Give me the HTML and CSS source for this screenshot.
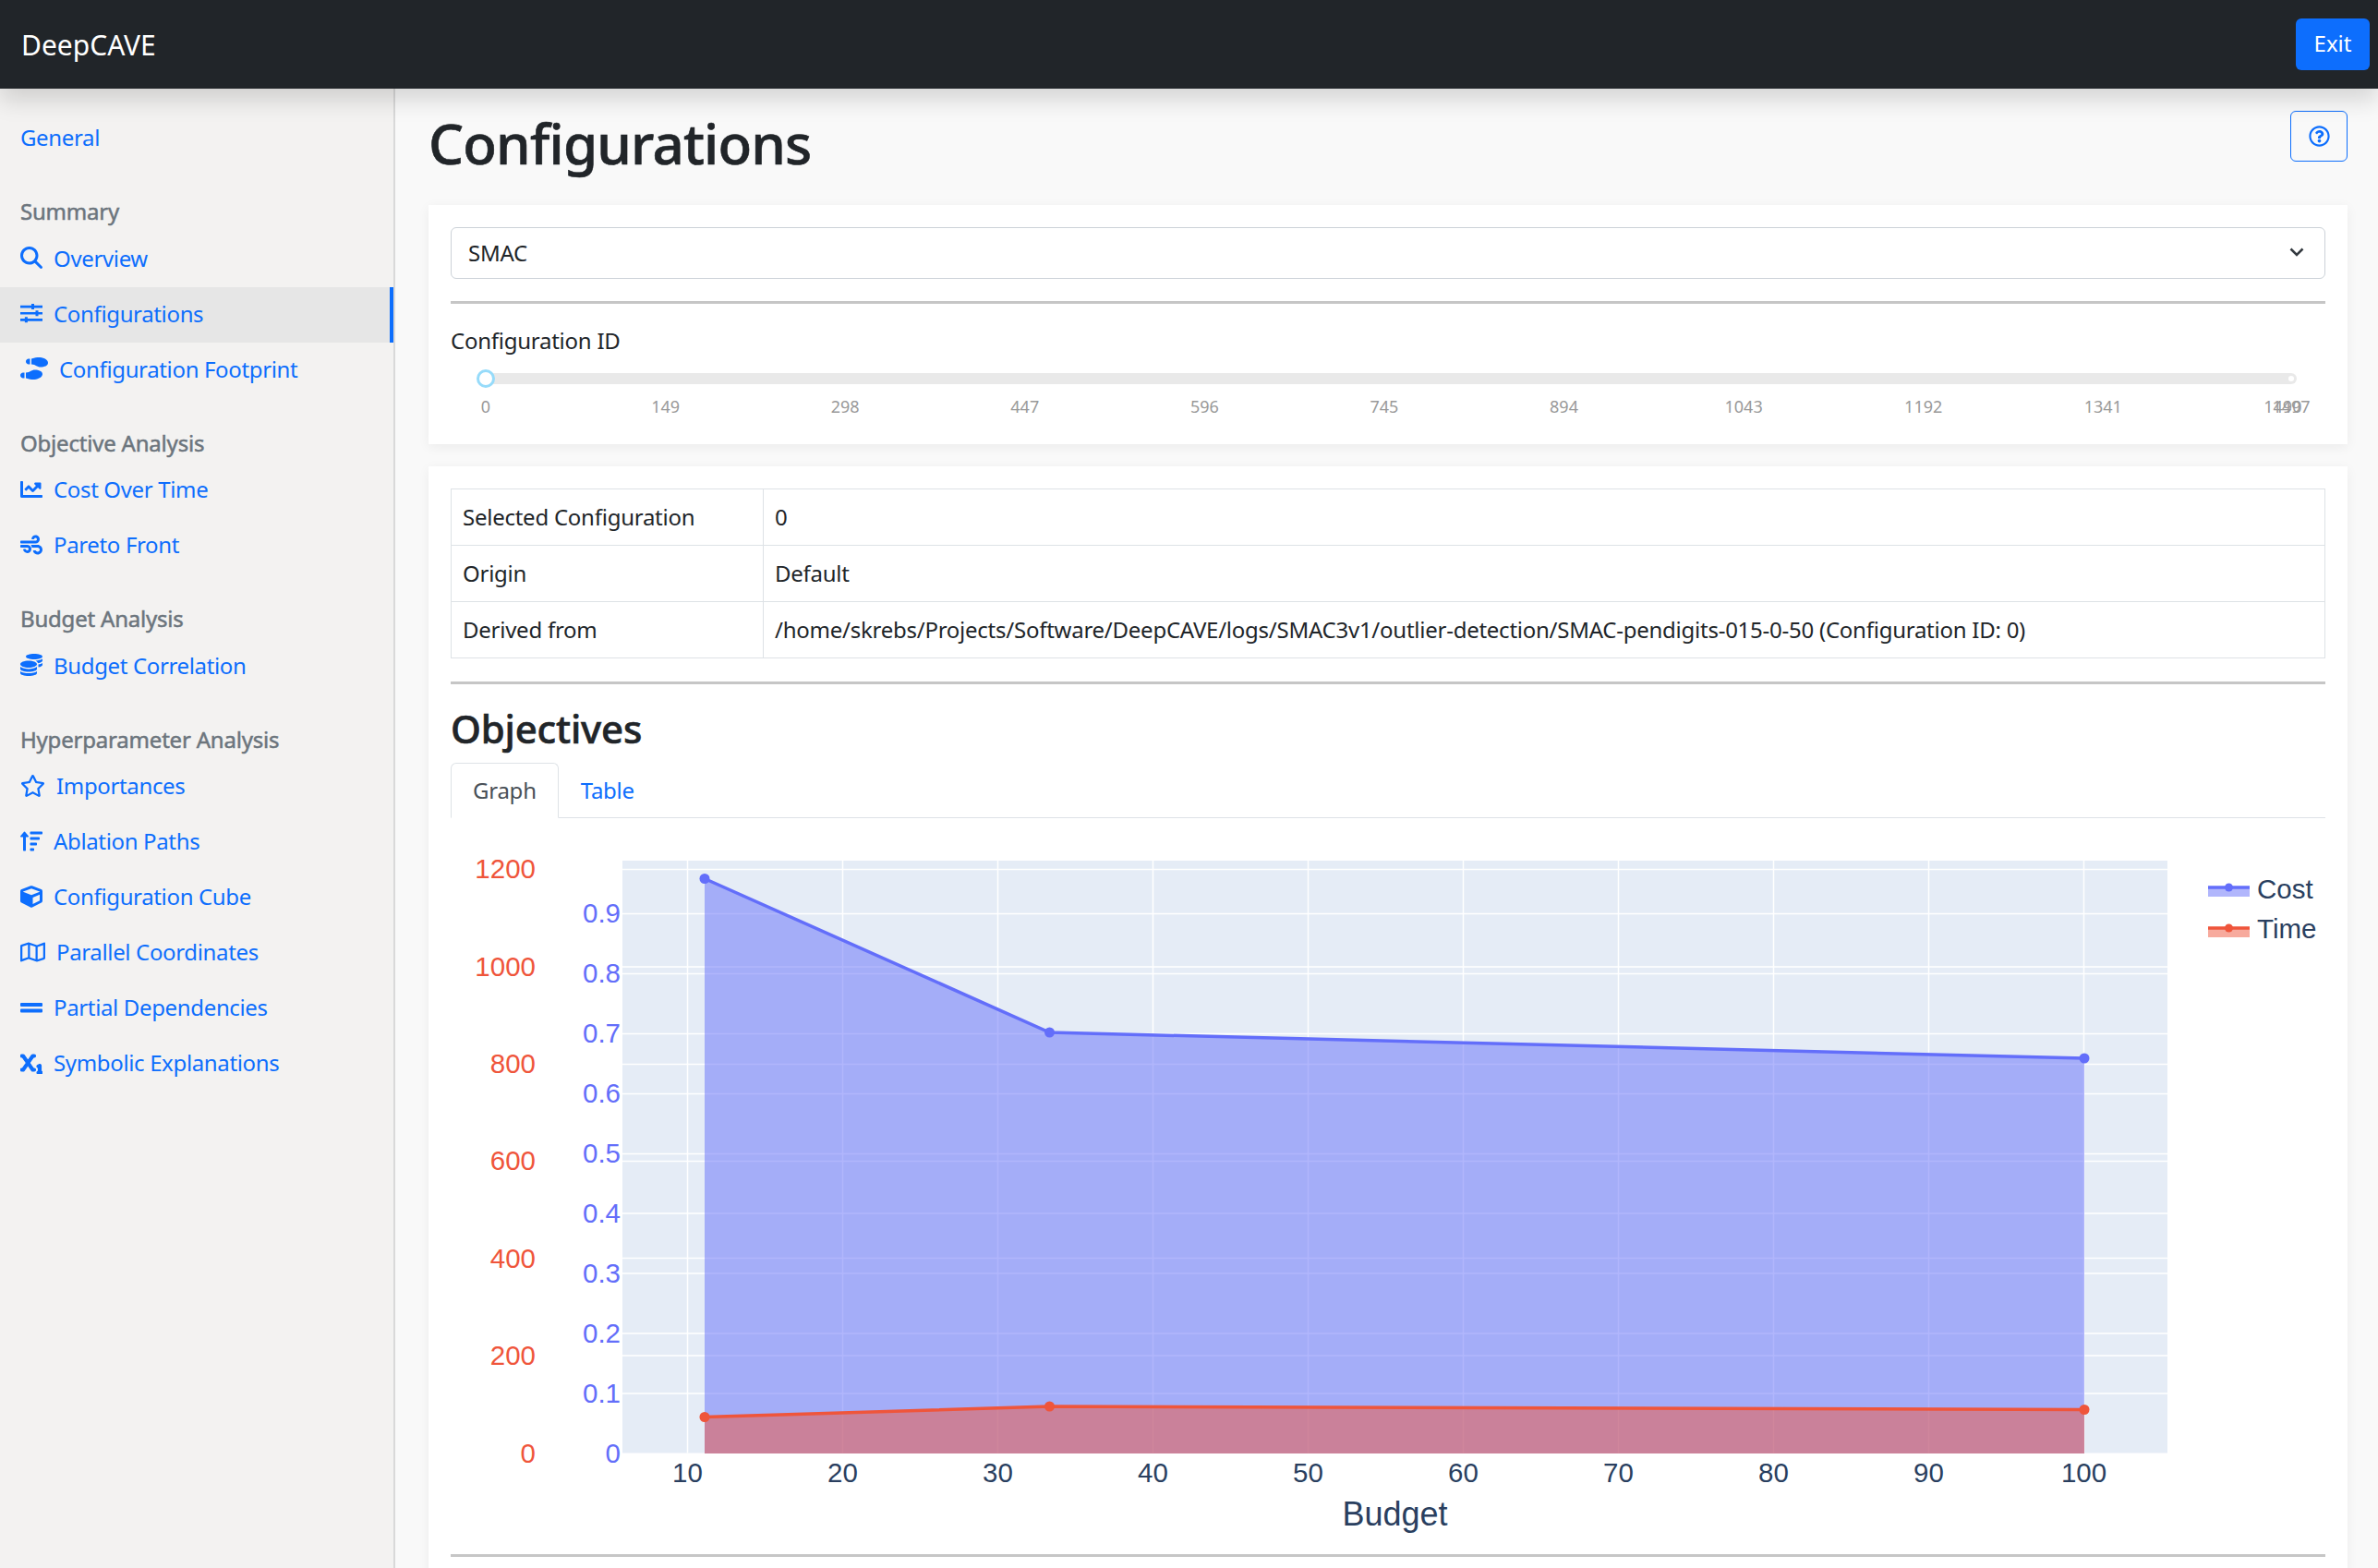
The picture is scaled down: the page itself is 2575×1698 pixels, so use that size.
FILE: index.html
```html
<!DOCTYPE html>
<html lang="en">
  <head>
    <meta charset="UTF-8" />
    <title>DeepCAVE</title>
    <link rel="stylesheet" href="styles.css">
  </head>
  <body>
    <header class="navbar">
      <span class="brand">DeepCAVE</span>
      <button class="exit-btn">Exit</button>
    </header>

    <div class="layout">
      <nav class="sidebar">
        <a class="nav-link">General</a>

        <div class="nav-heading">Summary</div>
        <a class="nav-link">
          <svg class="icon" viewBox="0 0 512 512"><path d="M416 208c0 45.9-14.9 88.3-40 122.7L502.6 457.4c12.5 12.5 12.5 32.8 0 45.3s-32.8 12.5-45.3 0L330.7 376c-34.4 25.2-76.8 40-122.7 40C93.1 416 0 322.9 0 208S93.1 0 208 0S416 93.1 416 208zM208 352a144 144 0 1 0 0-288 144 144 0 1 0 0 288z"/></svg>
          Overview
        </a>
        <a class="nav-link active">
          <svg class="icon" viewBox="0 0 512 512"><path d="M0 80h512v56H0zM0 232h512v56H0zM0 384h512v56H0zM256 44h64v128h-64zM352 196h64v128h-64zM104 348h64v128h-64z"/></svg>
          Configurations
        </a>
        <a class="nav-link">
          <svg class="icon icon-wide" viewBox="0 0 640 512"><path d="M192 160h32V32h-32c-35.35 0-64 28.65-64 64s28.65 64 64 64zM0 416c0 35.35 28.65 64 64 64h32V352H64c-35.35 0-64 28.65-64 64zm337.46-128c-34.91 0-76.16 13.12-104.73 32-24.79 16.38-44.52 32-104.73 32v128l57.53 15.97c26.21 7.28 53.01 13.12 80.31 15.05 32.69 2.31 65.6.67 97.58-6.2C472.9 481.3 512 429.22 512 384c0-64-84.18-96-174.54-96zM491.42 7.19C459.44.32 426.53-1.33 393.84.99c-27.3 1.93-54.1 7.77-80.31 15.04L256 32v128c60.2 0 79.94 15.62 104.73 32 28.57 18.88 69.82 32 104.73 32C555.82 224 640 192 640 128c0-45.22-39.1-97.3-148.58-120.81z"/></svg>
          Configuration Footprint
        </a>

        <div class="nav-heading">Objective Analysis</div>
        <a class="nav-link">
          <svg class="icon" viewBox="0 0 512 512"><path d="M496 384H64V80c0-8.84-7.16-16-16-16H16C7.16 64 0 71.16 0 80v336c0 17.67 14.33 32 32 32h464c8.84 0 16-7.16 16-16v-32c0-8.84-7.16-16-16-16zM464 96H345.94c-21.38 0-32.09 25.85-16.97 40.97l32.4 32.4L288 242.75l-73.37-73.37c-12.5-12.5-32.76-12.5-45.25 0l-68.69 68.69c-6.25 6.25-6.25 16.38 0 22.63l22.62 22.62c6.25 6.25 16.38 6.25 22.63 0L192 237.25l73.37 73.37c12.5 12.5 32.76 12.5 45.25 0l96-96 32.4 32.4c15.12 15.12 40.97 4.41 40.97-16.97V112c.01-8.84-7.15-16-15.99-16z"/></svg>
          Cost Over Time
        </a>
        <a class="nav-link">
          <svg class="icon" viewBox="0 0 512 512"><path d="M156.7 256H16c-8.8 0-16 7.2-16 16v32c0 8.8 7.2 16 16 16h142.2c15.9 0 30.8 10.9 33.4 26.6 3.3 20-12.1 37.4-31.6 37.4-14.1 0-26.1-9.2-30.4-21.9-2.1-6.3-8.6-10.1-15.2-10.1H81.6c-9.8 0-17.7 8.8-15.9 18.4 8.6 44.1 47.6 77.6 94.2 77.6 57.1 0 102.7-50.1 95.2-108.6C249 291 205.4 256 156.7 256zM16 224h336c59.7 0 106.8-54.8 93.8-116.7-7.6-36.2-36.9-65.5-73.1-73.1-55.4-11.6-105.1 24.9-114.9 75.5-1.9 9.6 6.1 18.3 15.8 18.3h32.8c6.7 0 13.1-3.8 15.2-10.1C325.9 105.2 337.9 96 352 96c19.4 0 34.9 17.4 31.6 37.4-2.6 15.7-17.4 26.6-33.4 26.6H16c-8.8 0-16 7.2-16 16v32c0 8.8 7.2 16 16 16zm384 32H243.5c12.4 17.4 20.1 37.8 22.3 64H400c26.5 0 48 21.5 48 48s-21.5 48-48 48c-17.9 0-33.3-9.9-41.6-24.4-2.9-5-8.7-7.6-14.5-7.6h-33.8c-10.9 0-19 10.8-15.3 21.1 17.8 50.6 70.5 84.8 129.4 72.3 41.2-8.7 75.1-41.6 84.7-82.7C526 321.5 470.5 256 400 256z"/></svg>
          Pareto Front
        </a>

        <div class="nav-heading">Budget Analysis</div>
        <a class="nav-link">
          <svg class="icon" viewBox="0 0 512 512"><path d="M0 405.3V448c0 35.3 86 64 192 64s192-28.7 192-64v-42.7C342.7 434.4 267.2 448 192 448S41.3 434.4 0 405.3zM320 128c106 0 192-28.7 192-64S426 0 320 0 128 28.7 128 64s86 64 192 64zM0 300.4V352c0 35.3 86 64 192 64s192-28.7 192-64v-51.6c-41.3 34-116.9 51.6-192 51.6S41.3 334.4 0 300.4zm416 11c57.3-11.1 96-31.7 96-55.4v-42.7c-23.2 16.4-57.3 27.6-96 34.5v63.6zM192 160C86 160 0 195.8 0 240s86 80 192 80 192-35.8 192-80-86-80-192-80zm219.3 56.3c60-10.8 100.7-32 100.7-56.3v-42.7c-35.5 25.1-96.5 38.6-160.7 41.8 29.5 14.3 51.2 33.5 60 57.2z"/></svg>
          Budget Correlation
        </a>

        <div class="nav-heading">Hyperparameter Analysis</div>
        <a class="nav-link">
          <svg class="icon icon-star" viewBox="0 0 576 512"><path d="M528.1 171.5L382 150.2 316.7 17.8c-11.7-23.6-45.6-23.9-57.4 0L194 150.2 47.9 171.5c-26.2 3.8-36.7 36.1-17.7 54.6l105.7 103-25 145.5c-4.5 26.3 23.2 46 46.4 33.7L288 439.6l130.7 68.7c23.2 12.2 50.9-7.4 46.4-33.7l-25-145.5 105.7-103c19-18.5 8.5-50.8-17.7-54.6zM388.6 312.3l23.7 138.4L288 385.4l-124.3 65.3 23.7-138.4-100.6-98 139-20.2 62.2-126 62.2 126 139 20.2-100.6 98z"/></svg>
          Importances
        </a>
        <a class="nav-link">
          <svg class="icon" viewBox="0 0 512 512"><path d="M304 416h-64c-8.84 0-16 7.16-16 16v32c0 8.84 7.16 16 16 16h64c8.84 0 16-7.16 16-16v-32c0-8.84-7.16-16-16-16zM16 160h48v304a16 16 0 0 0 16 16h32a16 16 0 0 0 16-16V160h48c14.21 0 21.39-17.24 11.31-27.31l-80-96a16 16 0 0 0-22.62 0l-80 96C-5.35 142.74 1.78 160 16 160zm416 0H240c-8.84 0-16 7.16-16 16v32c0 8.84 7.16 16 16 16h192c8.84 0 16-7.16 16-16v-32c0-8.84-7.16-16-16-16zm-64 128H240c-8.84 0-16 7.16-16 16v32c0 8.84 7.16 16 16 16h128c8.84 0 16-7.16 16-16v-32c0-8.84-7.16-16-16-16zM496 32H240c-8.84 0-16 7.16-16 16v32c0 8.84 7.16 16 16 16h256c8.84 0 16-7.16 16-16V48c0-8.84-7.16-16-16-16z"/></svg>
          Ablation Paths
        </a>
        <a class="nav-link">
          <svg class="icon" viewBox="0 0 512 512"><path d="M239.1 6.3l-208 78c-18.7 7-31.1 25-31.1 45v225.1c0 18.2 10.3 34.8 26.5 42.9l208 104c13.5 6.8 29.4 6.8 42.9 0l208-104c16.3-8.1 26.5-24.8 26.5-42.9V129.3c0-20-12.4-37.9-31.1-44.9l-208-78C262 2.2 250 2.2 239.1 6.3zM256 68.4l192 72v1.1l-192 78-192-78v-1.1l192-72zm32 356V275.5l160-65v133.9l-160 80z"/></svg>
          Configuration Cube
        </a>
        <a class="nav-link">
          <svg class="icon icon-map" viewBox="0 0 576 512"><path d="M560.02 32c-1.96 0-3.98.37-5.96 1.16L384.01 96H384L212 35.28A64.252 64.252 0 0 0 191.76 32c-6.69 0-13.37 1.05-19.81 3.14L20.12 87.95A32.006 32.006 0 0 0 0 117.66v346.32C0 473.17 7.53 480 15.99 480c1.96 0 3.97-.37 5.96-1.16L192 416l172 60.71a63.98 63.98 0 0 0 40.05.15l151.83-52.81A31.996 31.996 0 0 0 576 394.34V48.02c0-9.19-7.53-16.02-15.98-16.02zM224 90.42l128 45.19v285.97l-128-45.19V90.42zM48 418.05V129.07l128-44.53v286.2l-.64.23L48 418.05zm480-35.13l-128 44.53V141.26l.64-.24L528 93.95v288.97z"/></svg>
          Parallel Coordinates
        </a>
        <a class="nav-link">
          <svg class="icon" viewBox="0 0 24 24"><path d="M1 7h22a1 1 0 0 1 1 1v2a1 1 0 0 1-1 1H1a1 1 0 0 1-1-1V8a1 1 0 0 1 1-1zM1 13.500h22a1 1 0 0 1 1 1v2a1 1 0 0 1-1 1H1a1 1 0 0 1-1-1v-2a1 1 0 0 1 1-1z"/></svg>
          Partial Dependencies
        </a>
        <a class="nav-link">
          <svg class="icon icon-bold" viewBox="0 0 512 512"><path d="M32 64C14.3 64 0 78.3 0 96s14.3 32 32 32H47.3l89.6 128L47.3 384H32c-17.7 0-32 14.3-32 32s14.3 32 32 32H64c10.400 0 20.200-5.100 26.200-13.600L176 311.800l85.800 122.600c6 8.600 15.800 13.600 26.200 13.600h32c17.700 0 32-14.300 32-32s-14.300-32-32-32H304.700L215.100 256l89.600-128H320c17.700 0 32-14.300 32-32s-14.300-32-32-32H288c-10.400 0-20.200 5.100-26.200 13.600L176 200.200 90.200 77.600C84.200 69.100 74.400 64 64 64H32zM480 320c0-11.100-5.700-21.400-15.200-27.200s-21.200-6.400-31.100-1.400l-32 16c-15.800 7.900-22.200 27.100-14.300 42.900C393 361.500 404.300 368 416 368v80c-17.700 0-32 14.300-32 32s14.300 32 32 32h32 32c17.700 0 32-14.300 32-32s-14.300-32-32-32V320z"/></svg>
          Symbolic Explanations
        </a>
      </nav>

      <main class="content">
        <div class="page-head">
          <h1>Configurations</h1>
          <button class="help-btn">
            <svg class="help-icon" viewBox="0 0 512 512"><path d="M256 8C119.043 8 8 119.083 8 256c0 136.997 111.043 248 248 248s248-111.003 248-248C504 119.083 392.957 8 256 8zm0 448c-110.532 0-200-89.431-200-200 0-110.495 89.472-200 200-200 110.491 0 200 89.471 200 200 0 110.530-89.431 200-200 200zm107.244-255.200c0 67.052-72.421 68.084-72.421 92.863V300c0 6.627-5.373 12-12 12h-45.647c-6.627 0-12-5.373-12-12v-8.659c0-35.745 27.100-50.034 47.579-61.516 17.561-9.845 28.324-16.541 28.324-29.579 0-17.246-21.999-28.693-39.784-28.693-23.189 0-33.894 10.977-48.942 29.969-4.057 5.120-11.460 6.071-16.666 2.124l-27.824-21.098c-5.107-3.872-6.251-11.066-2.644-16.363C184.846 131.491 214.940 112 261.794 112c49.071 0 101.450 38.304 101.450 88.800zM298 368c0 23.159-18.841 42-42 42s-42-18.841-42-42 18.841-42 42-42 42 18.841 42 42z"/></svg>
          </button>
        </div>

        <section class="card">
          <div class="select-box">
            <span>SMAC</span>
            <svg class="chevron" viewBox="0 0 16 10"><path d="M1.500 1.500 8 8l6.500-6.500"/></svg>
          </div>
          <hr />
          <div class="field-label">Configuration ID</div>
          <div class="slider">
            <div class="rail"></div>
            <div class="rail-end"></div>
            <div class="handle"></div>
            <div class="marks">
              <span style="left: 0%">0</span>
              <span style="left: 9.953%">149</span>
              <span style="left: 19.907%">298</span>
              <span style="left: 29.860%">447</span>
              <span style="left: 39.813%">596</span>
              <span style="left: 49.766%">745</span>
              <span style="left: 59.719%">894</span>
              <span style="left: 69.673%">1043</span>
              <span style="left: 79.626%">1192</span>
              <span style="left: 89.579%">1341</span>
              <span style="left: 99.532%">1490</span>
              <span style="left: 100%">1497</span>
            </div>
          </div>
        </section>

        <section class="card">
          <table class="info-table">
            <tr><td class="info-key">Selected Configuration</td><td>0</td></tr>
            <tr><td class="info-key">Origin</td><td>Default</td></tr>
            <tr><td class="info-key">Derived from</td><td>/home/skrebs/Projects/Software/DeepCAVE/logs/SMAC3v1/outlier-detection/SMAC-pendigits-015-0-50 (Configuration ID: 0)</td></tr>
          </table>
          <hr class="table-rule" />
          <h3>Objectives</h3>
          <div class="tabs">
            <a class="tab active">Graph</a>
            <a class="tab">Table</a>
          </div>

          <svg class="chart" viewBox="488 900 2030 775">
            <rect x="674" y="932" width="1673" height="641.500" fill="#e5ecf6"/>

            <g class="grid">
              <path d="M744.500 932V1573.500M912.500 932V1573.500M1080.500 932V1573.500M1248.500 932V1573.500M1416.500 932V1573.500M1584.500 932V1573.500M1752.500 932V1573.500M1920.500 932V1573.500M2088.500 932V1573.500M2256.500 932V1573.500"/>
              <path d="M674 989.500H2347M674 1054.500H2347M674 1119.500H2347M674 1184.500H2347M674 1249.500H2347M674 1314H2347M674 1379H2347M674 1444H2347M674 1509H2347"/>
              <path d="M674 941.500H2347M674 1047H2347M674 1152.500H2347M674 1257.500H2347M674 1362.500H2347M674 1468H2347"/>
            </g>

            <polygon class="fill-cost" points="763,951.500 1136.500,1118 2257,1146 2257,1574 763,1574"/>
            <polygon class="fill-time" points="763,1534.500 1136.500,1523 2257,1526.500 2257,1574 763,1574"/>
            <polyline class="line-cost" points="763,951.500 1136.500,1118 2257,1146"/>
            <polyline class="line-time" points="763,1534.500 1136.500,1523 2257,1526.500"/>
            <g class="dots-cost">
              <circle cx="763" cy="951.500" r="5.500"/><circle cx="1136.500" cy="1118" r="5.500"/><circle cx="2257" cy="1146" r="5.500"/>
            </g>
            <g class="dots-time">
              <circle cx="763" cy="1534.500" r="5.500"/><circle cx="1136.500" cy="1523" r="5.500"/><circle cx="2257" cy="1526.500" r="5.500"/>
            </g>

            <g class="ticks ticks-cost">
              <text x="672" y="999">0.9</text><text x="672" y="1064">0.8</text><text x="672" y="1129">0.7</text>
              <text x="672" y="1194">0.6</text><text x="672" y="1259">0.5</text><text x="672" y="1324">0.4</text>
              <text x="672" y="1389">0.3</text><text x="672" y="1454">0.2</text><text x="672" y="1519">0.1</text>
              <text x="672" y="1584">0</text>
            </g>
            <g class="ticks ticks-time">
              <text x="580" y="951">1200</text><text x="580" y="1057">1000</text><text x="580" y="1162">800</text>
              <text x="580" y="1267">600</text><text x="580" y="1373">400</text><text x="580" y="1478">200</text>
              <text x="580" y="1584">0</text>
            </g>
            <g class="ticks ticks-x">
              <text x="744.500" y="1605">10</text><text x="912.500" y="1605">20</text><text x="1080.500" y="1605">30</text>
              <text x="1248.500" y="1605">40</text><text x="1416.500" y="1605">50</text><text x="1584.500" y="1605">60</text>
              <text x="1752.500" y="1605">70</text><text x="1920.500" y="1605">80</text><text x="2088.500" y="1605">90</text>
              <text x="2256.500" y="1605">100</text>
            </g>
            <text class="axis-title" x="1510.500" y="1652">Budget</text>

            <g class="legend">
              <rect class="fill-cost" x="2391" y="961" width="45" height="10"/>
              <path class="line-cost" d="M2391 961H2436"/>
              <circle class="dot-blue" cx="2413.500" cy="961" r="4.500"/>
              <text x="2444" y="973">Cost</text>
              <rect class="fill-red" x="2391" y="1005" width="45" height="10"/>
              <path class="line-time" d="M2391 1005H2436"/>
              <circle class="dot-red" cx="2413.500" cy="1005" r="4.500"/>
              <text x="2444" y="1016">Time</text>
            </g>
          </svg>

          <hr class="chart-rule" />
        </section>
      </main>
    </div>
  </body>
</html>
```

FILE: styles.css
```css
html,
body {
  height: 100%;
}

body {
  margin: 0;
  display: flex;
  flex-direction: column;
  overflow: hidden;
  font-family: "Noto Sans", sans-serif;
  font-size: 24px;
  letter-spacing: -0.25px;
  color: #212529;
  background: #f9f9f9;
}

.navbar {
  flex: none;
  position: relative;
  z-index: 2;
  height: 96px;
  padding: 0 9px 0 23px;
  display: flex;
  align-items: center;
  justify-content: space-between;
  background: #212529;
  box-shadow: 0 12px 24px rgba(0, 0, 0, 0.15);
}

.brand {
  color: white;
  font-size: 30px;
  letter-spacing: 0;
}

.exit-btn {
  width: 80px;
  height: 56px;
  padding: 0 0 3px;
  border: none;
  border-radius: 6px;
  background: #0d6efd;
  color: white;
  font: inherit;
}

.layout {
  flex: 1;
  display: flex;
  min-height: 0;
}

/* sidebar */

.sidebar {
  flex: none;
  width: 426px;
  padding-top: 24px;
  background: #f3f2f1;
  border-right: 2px solid #d9d9d9;
}

.nav-link {
  height: 60px;
  box-sizing: border-box;
  padding: 0 0 3px 22px;
  display: flex;
  align-items: center;
  gap: 12px;
  color: #0d6efd;
  white-space: nowrap;
  letter-spacing: -0.35px;
}

.nav-link.active {
  background: #e6e6e6;
  box-shadow: inset -4px 0 0 #0d6efd;
}

.nav-heading {
  height: 36px;
  margin: 32px 0 2.5px;
  padding-left: 22px;
  line-height: 33px;
  letter-spacing: -0.2px;
  color: #6c757d;
  -webkit-text-stroke: 0.5px #6c757d;
}

.icon {
  flex: none;
  width: 24px;
  height: 24px;
  fill: #0d6efd;
}

.icon-wide {
  width: 30px;
}

.icon-star,
.icon-map {
  width: 27px;
}

/* the subscript glyph is drawn heavier in the reference */
.icon-bold {
  stroke: #0d6efd;
  stroke-width: 24;
}

/* main column */

.content {
  flex: 1;
  min-width: 0;
  padding: 24px 33px 0 36px;
}

.page-head {
  height: 102px;
  display: flex;
  justify-content: space-between;
  align-items: flex-start;
}

h1 {
  margin: 0;
  font-size: 60px;
  font-weight: 500;
  line-height: 70px;
  letter-spacing: -0.82px;
  -webkit-text-stroke: 0.6px #212529;
}

.help-btn {
  width: 62px;
  height: 55px;
  padding: 0;
  display: flex;
  align-items: center;
  justify-content: center;
  border: 1.5px solid #0d6efd;
  border-radius: 6px;
  background: transparent;
}

.help-icon {
  width: 23px;
  height: 23px;
  fill: #0d6efd;
}

.card {
  margin-bottom: 24px;
  padding: 24px;
  background: white;
  box-shadow: 0 3px 12px rgba(0, 0, 0, 0.06);
}

.select-box {
  height: 56px;
  box-sizing: border-box;
  padding: 0 22px 2px 18px;
  display: flex;
  align-items: center;
  justify-content: space-between;
  border: 1.5px solid #ccd2d8;
  border-radius: 6px;
}

.chevron {
  width: 16px;
  height: 10px;
  fill: none;
  stroke: #343a40;
  stroke-width: 2.5;
}

hr {
  height: 3px;
  margin: 24px 0 0;
  border: none;
  background: #c6c6c6;
}

.field-label {
  margin-top: 22px;
  line-height: 36px;
}

/* slider: rail runs from value 0 to value 1497 */

.slider {
  position: relative;
  height: 61px;
  margin: 9px 37px 0 38px;
}

.rail {
  position: absolute;
  top: 8px;
  left: -6px;
  right: -6px;
  height: 12px;
  border-radius: 6px;
  background: #e9e9e9;
}

.rail-end {
  position: absolute;
  top: 11px;
  right: -3px;
  width: 6px;
  height: 6px;
  border-radius: 50%;
  background: white;
}

.handle {
  position: absolute;
  top: 4px;
  left: -10px;
  width: 20px;
  height: 20px;
  box-sizing: border-box;
  border: 3px solid #96dbfa;
  border-radius: 50%;
  background: white;
}

.marks span {
  position: absolute;
  top: 32px;
  transform: translateX(-50%);
  font-size: 18px;
  line-height: 24px;
  letter-spacing: 0;
  color: #999;
}

.info-table {
  width: 100%;
  border-collapse: collapse;
}

.info-table td {
  height: 61px;
  box-sizing: border-box;
  padding: 0 12px 2px;
  border: 1.5px solid #dee2e6;
}

.info-key {
  width: 338px;
}

.table-rule {
  margin-top: 25px;
}

h3 {
  margin: 18px 0 0;
  font-size: 42px;
  font-weight: 500;
  line-height: 60px;
  letter-spacing: -0.2px;
  -webkit-text-stroke: 0.6px #212529;
}

.tabs {
  margin-top: 7px;
  display: flex;
  border-bottom: 1.5px solid #dee2e6;
}

.tab {
  height: 60px;
  padding: 0 23px 2px;
  box-sizing: border-box;
  margin-bottom: -1.5px;
  display: flex;
  align-items: center;
  color: #0d6efd;
  border: 1.5px solid transparent;
}

.tab.active {
  color: #495057;
  background: white;
  border-color: #dee2e6 #dee2e6 white;
  border-radius: 6px 6px 0 0;
}

/* plot */

.chart {
  display: block;
  width: 2030px;
  height: 775px;
  margin-top: 14px;
  font-family: "Liberation Sans", sans-serif;
  letter-spacing: 0;
}

.chart-rule {
  margin-top: 8px;
}

.grid path {
  fill: none;
  stroke: white;
  stroke-width: 1.5;
}

.fill-cost {
  fill: rgba(99, 110, 250, 0.5);
}

.fill-time,
.fill-red {
  fill: rgba(239, 85, 59, 0.5);
}

.line-cost,
.line-time {
  fill: none;
  stroke-width: 3.5;
}

.line-cost {
  stroke: #636efa;
}

.line-time {
  stroke: #ef553b;
}

.dots-cost,
.dot-blue {
  fill: #636efa;
}

.dots-time,
.dot-red {
  fill: #ef553b;
}

.ticks {
  font-size: 29.500px;
}

.ticks-cost,
.ticks-time {
  text-anchor: end;
}

.ticks-cost {
  fill: #636efa;
}

.ticks-time {
  fill: #ef553b;
}

.ticks-x {
  text-anchor: middle;
  fill: #2a3f5f;
}

.axis-title {
  text-anchor: middle;
  font-size: 36px;
  fill: #2a3f5f;
}

.legend text {
  font-size: 29.500px;
  fill: #2a3f5f;
}
```
